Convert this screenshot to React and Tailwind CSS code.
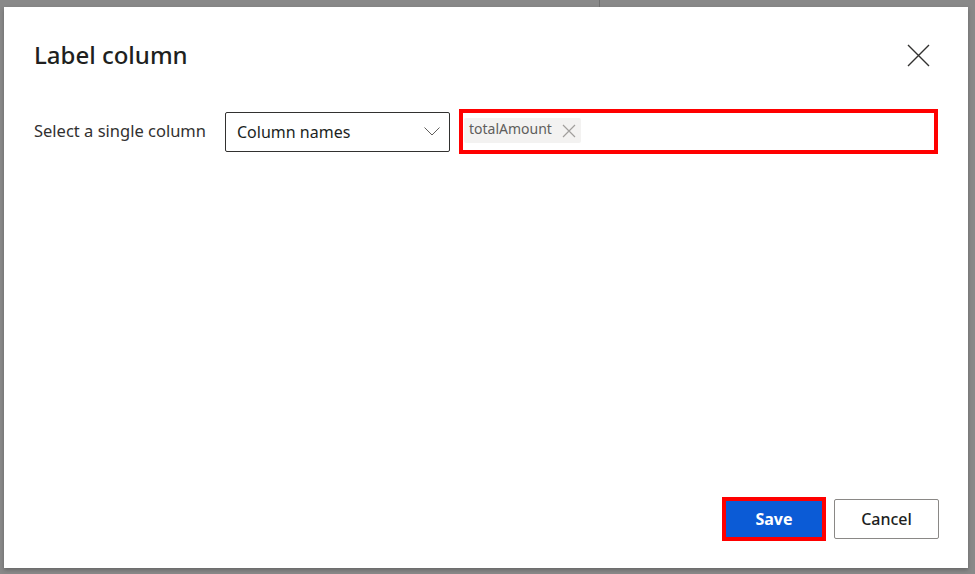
import React from 'react';

const font = { fontFamily: '"Segoe UI", "Noto Sans", "Open Sans", sans-serif' };

const Cross = ({ size, className, stroke = 1.5 }) => (
  <svg width={size} height={size} viewBox={`0 0 ${size} ${size}`} className={className} fill="none">
    <path d={`M1 1L${size - 1} ${size - 1}M${size - 1} 1L1 ${size - 1}`} stroke="currentColor" strokeWidth={stroke} />
  </svg>
);

const LabelColumnDialog = () => {
  return (
    <div className="flex h-[574px] w-[975px] flex-col bg-[#898989] pt-[7px] pl-[4px]" style={font}>
      {/* window divider peeking above the dialog */}
      <div className="absolute left-[599px] top-0 h-[7px] w-px bg-[#6f6f6f]" />

      <div className="flex h-[561px] w-[964px] flex-col bg-white px-[30px] pb-[27px] shadow-[0_2px_4px_rgba(0,0,0,0.25)]">
        {/* Header */}
        <div className="flex items-center justify-between pt-[31px]">
          <h1 className="text-[24px] font-medium leading-[34px] text-[#201f1e]">Label column</h1>
          <button className="mr-[4px] flex h-8 w-8 items-center justify-center text-[#323130]">
            <Cross size={23} stroke={1.4} />
          </button>
        </div>

        {/* Column selector */}
        <div className="mt-[37px] flex items-center">
          <span className="w-[191px] text-[16.5px] text-[#323130]">Select a single column</span>
          <div className="flex h-[40px] w-[225px] items-center justify-between rounded-[2px] border border-[#323130] pl-[11px] pr-[9px]">
            <span className="text-[16px] text-[#201f1e]">Column names</span>
            <svg width="16" height="9" viewBox="0 0 16 9" fill="none" className="text-[#605e5c]">
              <path d="M0.5 0.5L8 8L15.5 0.5" stroke="currentColor" strokeWidth="1" />
            </svg>
          </div>
          <div className="ml-[9px] flex h-[45px] w-[479px] items-start border-4 border-[#ff0000] pl-[1px] pt-[5px]">
            <div className="flex h-[25px] items-center gap-[10px] rounded-[2px] bg-[#f3f2f1] pl-[5px] pr-[5px]">
              <span className="pb-[4px] text-[14px] leading-none text-[#605e5c]">totalAmount</span>
              <Cross size={14} className="text-[#a19f9d]" stroke={1.2} />
            </div>
          </div>
        </div>

        <div className="flex-1" />

        {/* Footer */}
        <div className="-mr-px flex items-center justify-end gap-[8px]">
          <div className="border-4 border-[#ff0000]">
            <button className="h-[36px] w-[96px] bg-[#0b5bd6] text-[16px] font-bold text-white">Save</button>
          </div>
          <button className="h-[40px] w-[105px] rounded-[2px] border border-[#8a8886] bg-white text-[16px] font-medium text-[#201f1e]">
            Cancel
          </button>
        </div>
      </div>
    </div>
  );
};

export default function App() {
  return <LabelColumnDialog />;
}
